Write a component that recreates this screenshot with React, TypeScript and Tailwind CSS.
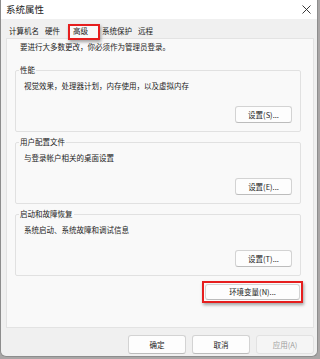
import React from "react";

function Btn({ children, className = "", disabled = false }: { children: React.ReactNode; className?: string; disabled?: boolean }) {
  return (
    <div
      className={`flex items-center justify-center rounded-[3px] border leading-none ${
        disabled
          ? "border-[#e2e2e2] bg-[#f5f5f5] text-[#9d9d9d]"
          : "border-[#d3d3d3] border-b-[#bcbcbc] bg-[#fdfdfd] text-[#1b1b1b]"
      } ${className}`}
    >
      {children}
    </div>
  );
}

function Group({ title, text, btn }: { title: string; text: string; btn: string }) {
  return (
    <fieldset className="rounded-[2px] border border-[#e1e1e1] pb-[8px]">
      <legend className="ml-[3px] px-px leading-[12px]">{title}</legend>
      <div className="pl-[8px] pt-[4px] leading-[12px]">{text}</div>
      <div className="mt-[14px] flex justify-end pr-[8px]">
        <Btn className="h-[17px] w-[57px]">{btn}</Btn>
      </div>
    </fieldset>
  );
}

function RedBox({ className = "" }: { className?: string }) {
  return (
    <span
      className={`pointer-events-none absolute border-2 border-[#e61e1e] shadow-[1px_2px_3px_rgba(0,0,0,0.35)] ${className}`}
    />
  );
}

export default function App() {
  return (
    <div className="h-[359px] w-[320px] overflow-hidden bg-[#a9a6a6] font-['Noto_Sans_CJK_SC',sans-serif] text-[7.5px] text-[#1b1b1b]">
      <div className="flex h-[357px] w-[318px] flex-col overflow-hidden rounded-b-[6px] border border-t-0 border-[#8d8d8d] bg-[#f0f0f0]">
        {/* title bar */}
        <div className="flex h-[19px] items-center justify-between bg-white pl-[5px] pr-[5px]">
          <span className="text-[9.5px] leading-none">系统属性</span>
          <svg width="9" height="9" viewBox="0 0 9 9" className="mr-[1px]">
            <path d="M0.5 0.5 L8.5 8.5 M8.5 0.5 L0.5 8.5" stroke="#222" strokeWidth="0.9" />
          </svg>
        </div>
        {/* tabs */}
        <div className="flex h-[19px] items-end pl-[5px]">
          <div className="flex h-[14px] items-center px-[3px]">计算机名</div>
          <div className="flex h-[14px] items-center px-[3px]">硬件</div>
          <div className="relative ml-[5px] flex h-[14px] items-center bg-[#f9f9f9] pl-[5px] pr-[11px]">
            高级
            <RedBox className="-right-[1px] -bottom-[2px] left-0 top-0" />
          </div>
          <div className="flex h-[14px] items-center px-[3px]">系统保护</div>
          <div className="flex h-[14px] items-center px-[3px]">远程</div>
        </div>
        {/* panel */}
        <div className="ml-[5px] mr-[3px] flex h-[290px] flex-col border border-[#e3e3e3] bg-[#f9f9f9] pl-[8px] pr-[12px]">
          <div className="ml-[5px] mt-[2px] leading-[12px]">要进行大多数更改，你必须作为管理员登录。</div>
          <div className="mt-[11px] flex flex-col gap-[4px]">
            <Group title="性能" text="视觉效果，处理器计划，内存使用，以及虚拟内存" btn="设置(S)..." />
            <Group title="用户配置文件" text="与登录帐户相关的桌面设置" btn="设置(E)..." />
            <Group title="启动和故障恢复" text="系统启动、系统故障和调试信息" btn="设置(T)..." />
          </div>
          <div className="mt-[8px] flex justify-end pr-[1px]">
            <div className="relative">
              <Btn className="h-[16px] w-[95px]">环境变量(N)...</Btn>
              <RedBox className="-bottom-[3px] -left-[3px] -right-[3px] -top-[3px]" />
            </div>
          </div>
        </div>
        {/* footer */}
        <div className="mt-[7px] flex justify-end gap-[6px] pr-[3px]">
          <Btn className="h-[19px] w-[58px] border-[#c2c2c2] border-b-[#9a9a9a]">确定</Btn>
          <Btn className="h-[19px] w-[58px]">取消</Btn>
          <Btn className="h-[19px] w-[58px]" disabled>
            应用(A)
          </Btn>
        </div>
      </div>
    </div>
  );
}
